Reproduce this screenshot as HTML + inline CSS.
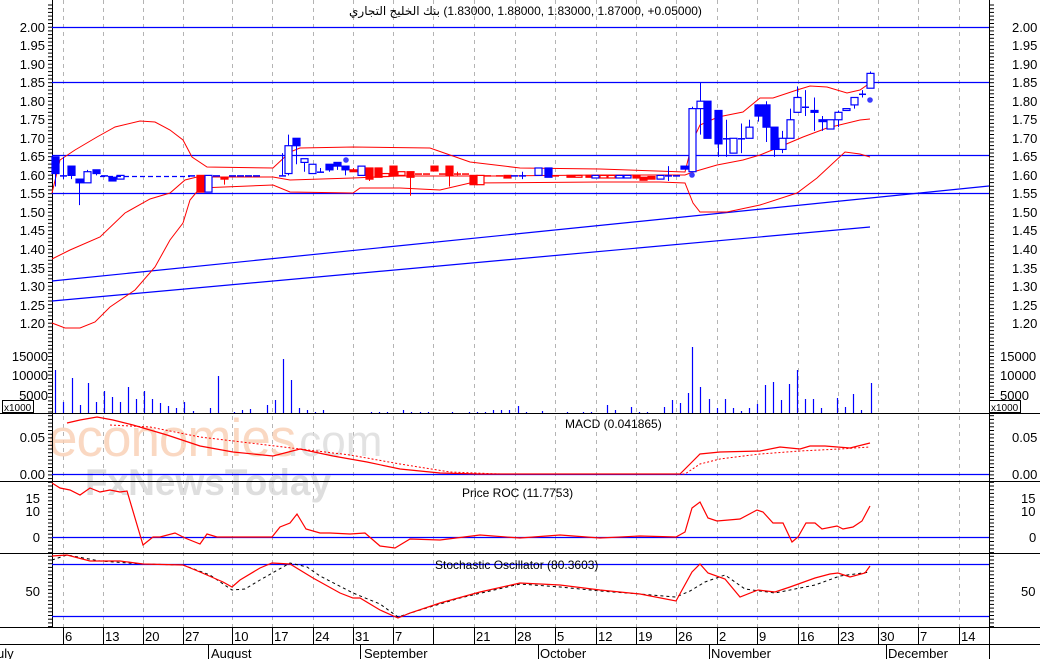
<!DOCTYPE html>
<html><head><meta charset="utf-8"><style>
html,body{margin:0;padding:0;background:#fff;width:1040px;height:659px;overflow:hidden;position:relative}
svg{display:block}
text{font-family:"Liberation Sans",Arial,sans-serif;font-size:13px;fill:#000}
#t{position:absolute;left:349px;top:4px;font:12px "Liberation Sans","DejaVu Sans",sans-serif;white-space:nowrap;color:#000;direction:ltr}
</style></head><body>
<svg id="s" width="1040" height="659" viewBox="0 0 1040 659" xmlns="http://www.w3.org/2000/svg">
<g id="grid"></g>
<text x="48" y="456" style="font-size:53px;fill:#f9cfb4;opacity:.8;letter-spacing:-1px">economies</text>
<text x="287" y="456" style="font-size:44px;fill:#dcdcdc;opacity:.8">.com</text>
<text x="85" y="495" style="font-size:37px;fill:#d6d6d6;opacity:.8;font-weight:bold">FxNewsToday</text>
<g id="g"></g>
<g text-anchor="end">
<text x="45" y="32">2.00</text><text x="45" y="50">1.95</text><text x="45" y="69">1.90</text><text x="45" y="87">1.85</text><text x="45" y="106">1.80</text><text x="45" y="124">1.75</text><text x="45" y="143">1.70</text><text x="45" y="161">1.65</text><text x="45" y="180">1.60</text><text x="45" y="198">1.55</text><text x="45" y="217">1.50</text><text x="45" y="235">1.45</text><text x="45" y="254">1.40</text><text x="45" y="273">1.35</text><text x="45" y="291">1.30</text><text x="45" y="310">1.25</text><text x="45" y="328">1.20</text>
<text x="48" y="361">15000</text><text x="48" y="380">10000</text><text x="48" y="400">5000</text>
<text x="45" y="442">0.05</text><text x="45" y="479">0.00</text>
<text x="40" y="503">15</text><text x="40" y="516">10</text><text x="40" y="542">0</text>
<text x="40" y="596">50</text>
</g>
<g>
<text x="1012" y="32">2.00</text><text x="1012" y="50">1.95</text><text x="1012" y="69">1.90</text><text x="1012" y="87">1.85</text><text x="1012" y="106">1.80</text><text x="1012" y="124">1.75</text><text x="1012" y="143">1.70</text><text x="1012" y="161">1.65</text><text x="1012" y="180">1.60</text><text x="1012" y="198">1.55</text><text x="1012" y="217">1.50</text><text x="1012" y="235">1.45</text><text x="1012" y="254">1.40</text><text x="1012" y="273">1.35</text><text x="1012" y="291">1.30</text><text x="1012" y="310">1.25</text><text x="1012" y="328">1.20</text>
<text x="1000" y="361">15000</text><text x="1000" y="380">10000</text><text x="1000" y="400">5000</text>
<text x="1012" y="442">0.05</text><text x="1012" y="479">0.00</text>
<text x="1021" y="503">15</text><text x="1021" y="516">10</text><text x="1029" y="542">0</text>
<text x="1021" y="596">50</text>
</g>
<rect x="2.5" y="400.5" width="31" height="12" fill="#fff" stroke="#000"/><text x="4" y="411" style="font-size:10px">x1000</text>
<rect x="989.5" y="400.5" width="31" height="12" fill="#fff" stroke="#000"/><text x="991" y="411" style="font-size:10px">x1000</text>
<text x="565" y="428" style="font-size:12px">MACD (0.041865)</text>
<text x="462" y="497" style="font-size:12px">Price ROC (11.7753)</text>
<text x="435" y="569" style="font-size:12px">Stochastic Oscillator (80.3603)</text>
<g style="font-size:14px">
<text x="65" y="641">6</text><text x="105" y="641">13</text><text x="145" y="641">20</text><text x="185" y="641">27</text><text x="234" y="641">10</text><text x="274" y="641">17</text><text x="315" y="641">24</text><text x="355" y="641">31</text><text x="395" y="641">7</text><text x="476" y="641">21</text><text x="517" y="641">28</text><text x="557" y="641">5</text><text x="598" y="641">12</text><text x="638" y="641">19</text><text x="678" y="641">26</text><text x="719" y="641">2</text><text x="759" y="641">9</text><text x="800" y="641">16</text><text x="840" y="641">23</text><text x="880" y="641">30</text><text x="920" y="641">7</text><text x="961" y="641">14</text>
<text x="-3" y="658">uly</text><text x="211" y="658">August</text><text x="364" y="658">September</text><text x="540" y="658">October</text><text x="711" y="658">November</text><text x="888" y="658">December</text>
</g>
</svg>
<div id="t"><span dir="rtl">بنك الخليج التجاري</span> (1.83000, 1.88000, 1.83000, 1.87000, +0.05000)</div>
<script>
var NS="http://www.w3.org/2000/svg",G=document.getElementById('g'),GR=document.getElementById('grid');
function el(p,t,a){var e=document.createElementNS(NS,t);for(var k in a)e.setAttribute(k,a[k]);p.appendChild(e);return e}
function Y(p){return 27+(2-p)*371}
var gx=[63,103,143,183,232,272,313,353,393,433,474,515,555,596,636,676,717,757,798,838,878,918,959];
gx.forEach(function(x){el(GR,'line',{x1:x+.5,y1:0,x2:x+.5,y2:627,stroke:'#b4b4b4','stroke-dasharray':'4,4'});
 el(GR,'line',{x1:x+.5,y1:627,x2:x+.5,y2:644,stroke:'#000'})});
function L(x1,y1,x2,y2,c,w,d){var a={x1:x1,y1:y1,x2:x2,y2:y2,stroke:c,'stroke-width':w||1};if(d)a['stroke-dasharray']=d;el(G,'line',a)}
function P(pts,c,d,w){var a={points:pts,fill:'none',stroke:c,'stroke-width':w||1};if(d)a['stroke-dasharray']=d;el(G,'polyline',a)}
L(52.5,0,52.5,627,'#000');L(989.5,0,989.5,659,'#000');
[413.5,481.5,553.5,627.5,644.5].forEach(function(y){L(0,y,1040,y,'#000')});
[208,360,538,709,886].forEach(function(x){L(x+.5,644,x+.5,659,'#000')});
for(var y=5;y<627;y+=3.7){L(48,y,52,y,'#000');L(989,y,994,y,'#000')}
[27,82,155,193].forEach(function(y){L(52,y+.5,989,y+.5,'#0000ff',1.2)});
L(52,281,989,186,'#0000ff',1.2);L(52,301,870,227,'#0000ff',1.2);
L(52,474.5,989,474.5,'#0000ff',1.2);L(52,537.5,989,537.5,'#0000ff',1.2);
L(52,564.5,989,564.5,'#0000ff',1.2);L(52,616.5,989,616.5,'#0000ff',1.2);
P("52,193 60,160 75,150 97,137 115,127 140,121 155,122 170,130 183,140 192,157 207,167 273,168 290,152 300,148 353,147 430,148 450,155 470,162 520,168 600,169 685,172 693,140 700,125 718,117 743,112 760,98 773,98 797,90 810,86 827,87 847,93 860,90 870,83",'#f00');
P("52,259 70,250 100,237 125,213 150,199 170,193 185,180 197,177 273,177 290,180 353,178 400,176 500,176 600,175 685,175 693,172 717,165 743,160 760,155 777,148 803,137 827,128 860,120 870,119",'#f00');
P("52,323 65,328 80,328 95,322 110,307 135,290 155,267 170,240 183,223 190,200 200,188 273,185 290,192 353,193 360,188 400,188 440,190 470,183 600,182 660,182 685,183 693,203 700,212 727,212 760,205 797,193 817,178 845,152 860,154 870,157",'#f00');
function C(x,o,c,h,l,col,f){var t=Math.min(Y(o),Y(c)),b=Math.max(Y(o),Y(c));
 L(x+.5,Y(h),x+.5,Y(l),col);
 if(b-t<1.5){L(x-3,t+.5,x+4,t+.5,col,1.5)}else el(G,'rect',{x:x-3,y:t,width:7,height:b-t,fill:f?col:'#fff',stroke:col,'stroke-width':1.2})}
var B='#0000ff',R='#f00';
[[55,1.65,1.605,1.65,1.57,B,1],[63,1.60,1.60,1.65,1.59,B,0],[71,1.625,1.60,1.625,1.59,B,1],[79,1.59,1.58,1.59,1.52,B,1],[87,1.61,1.58,1.615,1.58,B,0],[96,1.615,1.605,1.615,1.60,B,1],[104,1.60,1.60,1.60,1.60,B,0],[112,1.595,1.585,1.595,1.585,B,1],[120,1.60,1.59,1.60,1.59,B,0],
[191,1.60,1.60,1.60,1.60,B,0],[200,1.60,1.555,1.60,1.555,R,1],[208,1.60,1.555,1.60,1.555,B,0],[216,1.60,1.60,1.60,1.60,B,0],[224,1.595,1.59,1.595,1.575,R,1],[232,1.60,1.60,1.6,1.6,B,0],[240,1.60,1.60,1.6,1.6,B,0],[248,1.60,1.60,1.6,1.6,B,0],[256,1.60,1.60,1.6,1.6,B,0],
[282,1.60,1.60,1.66,1.60,B,0],[288,1.68,1.605,1.71,1.60,B,0],[296,1.70,1.68,1.70,1.63,B,1],[304,1.645,1.635,1.645,1.61,B,0],[312,1.63,1.605,1.63,1.605,B,0],[320,1.61,1.61,1.62,1.61,B,0],[329,1.63,1.615,1.63,1.61,B,1],[337,1.635,1.625,1.635,1.615,B,1],[345,1.625,1.615,1.625,1.60,B,1],[353,1.615,1.61,1.62,1.61,R,1],
[361,1.625,1.60,1.625,1.60,B,0],[369,1.62,1.59,1.62,1.585,R,1],[378,1.62,1.595,1.62,1.595,R,1],[385,1.605,1.597,1.605,1.597,R,0],[393,1.625,1.60,1.625,1.60,R,1],[401,1.61,1.60,1.61,1.60,R,0],[410,1.61,1.595,1.61,1.545,R,1],[418,1.605,1.605,1.605,1.605,R,0],[426,1.605,1.605,1.605,1.605,R,0],[434,1.625,1.612,1.625,1.612,R,1],[442,1.605,1.605,1.605,1.605,R,0],[449,1.625,1.60,1.625,1.57,R,1],[457,1.605,1.605,1.61,1.60,R,0],[465,1.605,1.605,1.605,1.605,R,0],[473,1.60,1.575,1.60,1.575,R,1],[480,1.60,1.575,1.60,1.575,R,0],[487,1.60,1.60,1.6,1.6,R,0],[499,1.60,1.60,1.6,1.6,R,0],[507,1.60,1.593,1.60,1.593,R,1],[514,1.60,1.60,1.60,1.60,B,0],[522,1.60,1.60,1.61,1.59,B,0],[538,1.62,1.60,1.62,1.60,B,0],[548,1.62,1.595,1.62,1.595,B,1],[555,1.60,1.60,1.6,1.6,R,0],
[570,1.60,1.595,1.60,1.595,R,1],[578,1.60,1.595,1.60,1.595,R,0],[589,1.60,1.595,1.6,1.595,R,1],[595,1.60,1.593,1.6,1.593,B,0],[603,1.60,1.593,1.6,1.593,R,0],[611,1.60,1.593,1.6,1.593,R,0],[619,1.60,1.593,1.6,1.593,B,0],[627,1.60,1.593,1.6,1.593,B,0],[636,1.60,1.593,1.6,1.593,R,1],[643,1.595,1.587,1.595,1.587,R,1],[651,1.597,1.59,1.597,1.59,R,1],[660,1.60,1.59,1.60,1.59,B,0],[668,1.60,1.60,1.625,1.585,B,0],[676,1.60,1.60,1.60,1.60,B,0],[684,1.625,1.617,1.625,1.617,B,1],
[692,1.78,1.61,1.785,1.61,B,0],[700,1.80,1.78,1.85,1.71,B,0],[707,1.80,1.70,1.80,1.70,B,1],[718,1.775,1.685,1.775,1.65,B,1],[726,1.70,1.70,1.75,1.65,B,0],[733,1.70,1.66,1.70,1.66,B,0],[741,1.70,1.70,1.74,1.66,B,0],[749,1.73,1.70,1.75,1.70,B,0],[758,1.79,1.76,1.79,1.745,B,1],[766,1.79,1.73,1.80,1.69,B,1],[774,1.73,1.67,1.73,1.65,B,1],[782,1.70,1.67,1.72,1.66,B,0],[790,1.75,1.70,1.78,1.70,B,0],[797,1.81,1.77,1.84,1.77,B,0],[805,1.785,1.785,1.83,1.76,B,0],[814,1.775,1.77,1.81,1.72,B,1],[822,1.75,1.745,1.76,1.72,B,1],[830,1.75,1.725,1.75,1.725,B,0],[838,1.77,1.75,1.775,1.73,B,0],[846,1.78,1.775,1.78,1.775,B,0],[854,1.81,1.79,1.81,1.78,B,0],[862,1.82,1.82,1.83,1.81,B,0],[870,1.875,1.835,1.88,1.835,B,0]
].forEach(function(a){C.apply(null,a)});
L(100,176.5,190,176.5,B,1.2,'5,3');
[[346,160],[692,175],[870,100]].forEach(function(d){el(G,'circle',{cx:d[0],cy:d[1],r:2.8,fill:'#3b3bff'})});
var v=[[55,43],[63,11],[72,35],[80,8],[88,30],[96,11],[104,22],[112,16],[120,11],[128,26],[136,14],[144,22],[152,14],[160,10],[168,7],[176,5],[184,11],[193,2],[210,5],[218,37],[234,1],[242,3],[250,4],[267,8],[275,13],[283,54],[291,33],[299,5],[307,3],[315,1],[323,3],[371,1],[379,1],[387,1],[403,3],[411,1],[420,1],[428,1],[452,1],[469,1],[477,1],[485,1],[493,3],[501,3],[509,3],[518,7],[526,1],[542,2],[567,1],[583,1],[591,1],[607,8],[615,3],[631,6],[639,1],[647,1],[664,6],[672,13],[680,10],[688,20],[692,66],[700,26],[709,14],[717,5],[725,14],[733,5],[741,2],[749,5],[757,9],[765,28],[773,31],[781,13],[789,29],[797,43],[805,14],[813,14],[821,5],[837,15],[845,6],[853,19],[861,3],[871,30]];
v.forEach(function(a){L(a[0]+.5,413,a[0]+.5,413-a[1],B,1.2)});
P("67,423 80,420 97,417 113,420 133,425 167,435 200,446 233,452 273,456 300,449 333,456 367,462 400,469 440,473 480,474 680,474 692,462 700,454 720,452 760,451 780,447 800,449 810,446 825,446 850,448 870,443",R,null,1.2);
P("110,425 150,427 200,437 300,449 350,455 400,464 450,472 500,474 685,474 700,464 720,459 760,454 800,451 840,449 870,447",R,'2,2',1);
P("52,483 60,488 70,490 80,495 90,488 100,492 110,490 120,492 127,491 143,545 153,537 160,537 175,533 185,538 200,544 207,534 217,537 232,537 272,537 280,527 290,523 297,514 306,529 320,533 330,533 350,534 365,533 380,546 395,548 410,539 440,540 480,535 520,538 560,535 600,538 640,536 676,537 685,532 692,508 700,502 708,518 717,521 740,519 757,510 763,512 773,523 783,523 792,542 798,537 806,523 815,523 822,529 837,526 843,529 853,527 862,521 870,506",R,null,1.2);
P("52,560 67,555 100,561 143,564 183,565 210,575 232,590 245,589 260,580 290,563 307,567 320,576 353,593 380,604 398,617 420,610 460,598 520,584 560,587 600,591 640,594 676,597 690,591 705,582 725,575 745,589 775,593 815,585 840,576 870,572",'#000','3,3',1);
P("52,556 67,555 90,561 120,561 143,564 183,565 200,572 223,582 232,587 240,580 260,568 272,563 290,564 313,578 340,593 353,598 360,598 380,610 398,618 410,613 440,603 480,592 520,583 560,585 600,590 640,594 676,601 692,572 700,564 708,573 725,579 740,597 758,590 775,592 790,587 815,578 830,574 838,573 850,577 865,573 870,566",R,null,1.2);
</script>
</body></html>
